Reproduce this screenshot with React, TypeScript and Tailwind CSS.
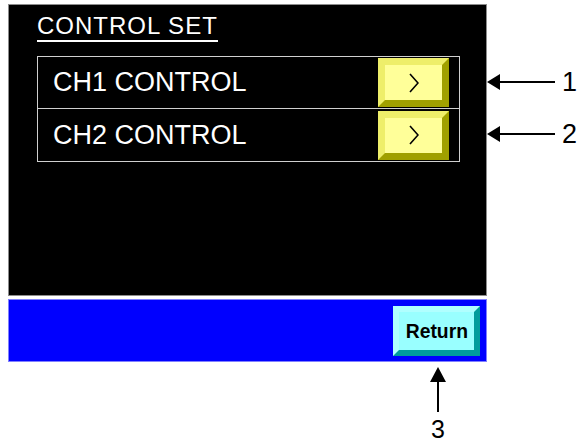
import React from "react";

const font = { fontFamily: '"Liberation Sans", Arial, sans-serif' };

function Chevron() {
  return (
    <svg width="10" height="20" viewBox="0 0 10 20">
      <polyline points="1,1 9,10 1,19" fill="none" stroke="#000" strokeWidth="1.6" />
    </svg>
  );
}

function YellowButton() {
  return (
    <div className="w-[71px] h-[49px] border-[7px] border-t-[#eeee6a] border-l-[#eeee6a] border-b-[#a0a000] border-r-[#a0a000] bg-[#ffff99] flex items-center justify-center">
      <Chevron />
    </div>
  );
}

function Row({ label, last }: { label: string; last?: boolean }) {
  return (
    <div
      className={
        "h-[52px] flex items-center justify-between pl-[15px] pr-[10px] " +
        (last ? "" : "border-b border-[#d0d0d0]")
      }
    >
      <span className="text-white text-[27px] leading-[27px]" style={font}>
        {label}
      </span>
      <YellowButton />
    </div>
  );
}

function LeftArrow({ n }: { n: string }) {
  return (
    <div className="h-[52px] flex items-center">
      <svg width="68" height="16" viewBox="0 0 68 16">
        <polygon points="0,8 13,0 13,16" fill="#000" />
        <line x1="12" y1="8" x2="68" y2="8" stroke="#000" strokeWidth="2" />
      </svg>
      <span className="ml-[7px] text-black text-[27px] leading-[27px]" style={font}>
        {n}
      </span>
    </div>
  );
}

export default function App() {
  return (
    <div className="w-[579px] h-[445px] bg-white flex pl-[8px] pt-[4px]" style={font}>
      <div className="w-[479px] flex flex-col">
        <div className="h-[292px] bg-black border border-[#8c8c8c] pl-[28px] pt-[9px] pr-[26px] flex flex-col">
          <div>
            <span className="inline-block text-white text-[24px] leading-[24px] tracking-[1px] pb-[2px] border-b-2 border-white mr-[-1px]">
              CONTROL SET
            </span>
          </div>
          <div className="mt-[14px] border border-[#d0d0d0]">
            <Row label="CH1 CONTROL" />
            <Row label="CH2 CONTROL" last />
          </div>
        </div>
        <div className="mt-[3px] h-[63px] bg-[#0000ff] border border-[#8080ff] flex items-center justify-end pr-[6px]">
          <div className="w-[87px] h-[50px] border-[6px] border-t-[#b0ffff] border-l-[#b0ffff] border-b-[#009c9c] border-r-[#009c9c] bg-[#99ffff] flex items-center justify-center">
            <span className="inline-block scale-x-[0.92] text-black font-bold text-[21px] leading-[21px]" style={font}>
              Return
            </span>
          </div>
        </div>
        <div className="pl-[415px] mt-[5px]">
          <div className="w-[30px] flex flex-col items-center">
            <svg width="16" height="45" viewBox="0 0 16 45">
              <polygon points="8,0 0,15 16,15" fill="#000" />
              <line x1="8" y1="14" x2="8" y2="45" stroke="#000" strokeWidth="2" />
            </svg>
            <span className="mt-[5px] text-black text-[25px] leading-[25px]" style={font}>
              3
            </span>
          </div>
        </div>
      </div>
      <div className="flex flex-col pt-[52px]">
        <LeftArrow n="1" />
        <LeftArrow n="2" />
      </div>
    </div>
  );
}
